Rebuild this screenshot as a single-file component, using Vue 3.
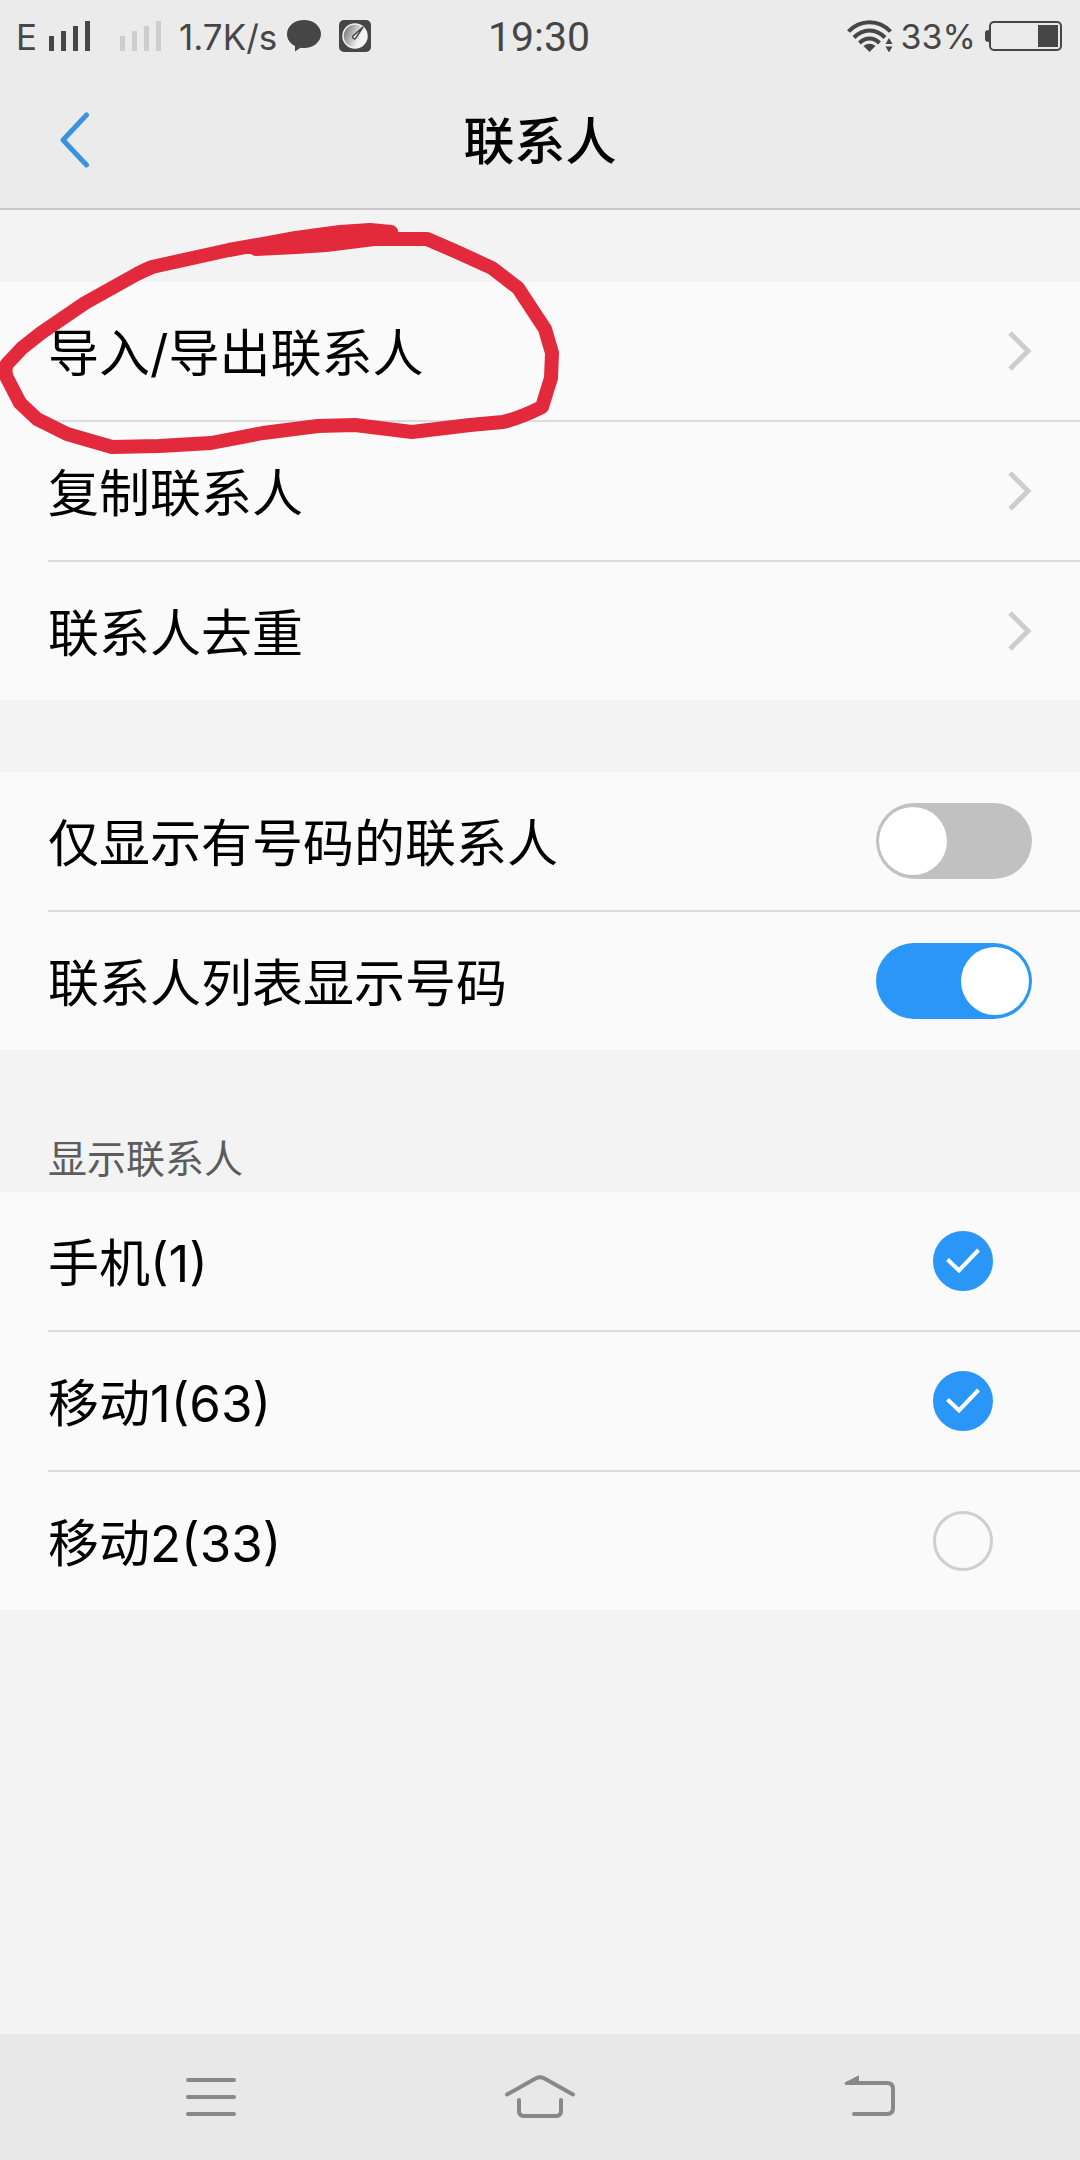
<script setup>
import { ref } from 'vue'

const links = ['导入/导出联系人', '复制联系人', '联系人去重']

const switches = ref([
  { id: 'only-numbers', label: '仅显示有号码的联系人', on: false },
  { id: 'show-numbers', label: '联系人列表显示号码', on: true },
])

const sources = ref([
  { id: 'phone', label: '手机(1)', on: true },
  { id: 'sim-1', label: '移动1(63)', on: true },
  { id: 'sim-2', label: '移动2(33)', on: false },
])
</script>

<template>
  <div class="screen">
    <header class="top">
      <div class="status">
        <div class="status-left">
          <span class="network">E</span>
          <svg class="signal" width="41" height="30" viewBox="0 0 41 30" aria-hidden="true">
            <path d="M0 15h5v15H0zM12 10h5v20h-5zM24 5h5v25h-5zM36 0h5v30h-5z" />
          </svg>
          <svg class="signal signal-off" width="41" height="30" viewBox="0 0 41 30" aria-hidden="true">
            <path d="M0 15h5v15H0zM12 10h5v20h-5zM24 5h5v25h-5zM36 0h5v30h-5z" />
          </svg>
          <span class="speed">1.7K/s</span>
          <svg class="bubble" width="34" height="32" viewBox="0 0 34 32" aria-hidden="true">
            <path d="M17 0C26.500 0 34 6.200 34 14s-7.500 14-17 14c-1.300 0-2.400-.1-3.500-.3L8 31.500V26C3 23.500 0 19.200 0 14 0 6.200 7.500 0 17 0z" />
          </svg>
          <svg class="gauge" width="32" height="32" viewBox="0 0 32 32" aria-hidden="true">
            <defs>
              <linearGradient id="dial" x1="0" y1="0.300" x2="0.700" y2="0.600">
                <stop offset="0" stop-color="#777" />
                <stop offset="1" stop-color="#f2f2f2" />
              </linearGradient>
            </defs>
            <rect width="32" height="32" rx="5" fill="#464646" />
            <circle cx="16" cy="16" r="12" fill="url(#dial)" stroke="#f2f2f2" stroke-width="1.500" />
            <path d="M24 7L14 16a1.800 1.800 0 0 0 2.500 2.500z" fill="#f2f2f2" stroke="#464646" stroke-width="1.500" />
          </svg>
        </div>
        <time class="clock">19:30</time>
        <div class="status-right">
          <svg width="46" height="32" viewBox="0 0 46 32" aria-hidden="true">
            <g fill="none" stroke="#464646" stroke-width="4">
              <path d="M1.500 11.500C13-1 32-1 43.500 11.500" />
              <path d="M7 17.500c9-9.500 22-9.500 31 0" />
              <path d="M12.500 23c6-6 14-6 20 0" />
            </g>
            <path d="M22.500 32l-6-6c4-3 8-3 12 0z" fill="#464646" />
            <path d="M38.500 24l3.500-6 3.500 6zM38.500 26.500h7L42 32.500z" fill="#464646" />
          </svg>
          <span class="percent">33%</span>
          <svg width="78" height="30" viewBox="0 0 78 30" aria-hidden="true">
            <path d="M5 9C2 9 1 10 1 12v6c0 2 1 3 4 3z" fill="#464646" />
            <rect x="6" y="1" width="71" height="28" rx="4" fill="none" stroke="#464646" stroke-width="2" />
            <path d="M54 4h20v22H54z" fill="#464646" />
          </svg>
        </div>
      </div>
      <div class="bar">
        <button class="back" type="button" aria-label="返回">
          <svg width="30" height="56" viewBox="0 0 30 56" aria-hidden="true">
            <path d="M26.500 3L3 28l23.500 25" />
          </svg>
        </button>
        <h1>联系人</h1>
      </div>
    </header>

    <main>
      <section class="group marked">
        <a v-for="item in links" :key="item" class="row" href="#">
          <span class="label">{{ item }}</span>
          <svg width="24" height="40" viewBox="0 0 24 40" aria-hidden="true">
            <path d="M2 2l18 18L2 38" />
          </svg>
        </a>
        <svg class="scribble" width="570" height="240" viewBox="0 220 570 240" aria-hidden="true">
          <path
            class="stroke"
            d="M256 249L296 247L326 245L374 239L427 239L457 252L492 268L518 288L545 329L552 353L551 378L542 407C528 414 516 419 503 422L470 425L412 432L355 425L318 426L263 433L211 443L159 446L112 447L67 434L37 419L20 403L7 378Q4 370 7 364L22 348L41 333L85 303L137 274Q145 270 152 267L229 250L296 238L340 232L370 230L391 232"
          />
          <path class="fill" d="M229 250L296 238L370 230L391 232L427 239L374 239L296 247z" />
        </svg>
      </section>

      <section class="group">
        <label v-for="item in switches" :key="item.id" class="row" :for="item.id">
          <span class="label">{{ item.label }}</span>
          <input :id="item.id" v-model="item.on" class="switch" type="checkbox" role="switch" />
        </label>
      </section>

      <h2>显示联系人</h2>
      <section class="group sources">
        <label v-for="item in sources" :key="item.id" class="row" :for="item.id">
          <span class="label">{{ item.label }}</span>
          <span class="tick">
            <input :id="item.id" v-model="item.on" type="checkbox" />
            <svg v-if="item.on" width="60" height="60" viewBox="0 0 60 60" aria-hidden="true">
              <path d="M14.500 28.500L26 39.500L45.500 19" />
            </svg>
          </span>
        </label>
      </section>
    </main>

    <nav class="keys">
      <button type="button" aria-label="菜单">
        <svg width="50" height="44" viewBox="0 0 50 44" aria-hidden="true">
          <path d="M2 5h46M2 22h46M2 39h46" />
        </svg>
      </button>
      <button type="button" aria-label="主页">
        <svg width="70" height="44" viewBox="0 0 70 44" aria-hidden="true">
          <path d="M2 19.500L31 3.300Q35 1 39 3.300L68 19.500M14 25v11q0 5 5 5h32q5 0 5-5V25" />
        </svg>
      </button>
      <button type="button" aria-label="后退">
        <svg width="52" height="44" viewBox="0 0 52 44" aria-hidden="true">
          <path d="M4 8h39q6 0 6 6v19q0 6-6 6H10" />
          <path class="head" d="M1 8L14.500 1v8.500H2z" />
        </svg>
      </button>
    </nav>
  </div>
</template>

<style>
body {
  margin: 0;
  background: #f3f3f3;
}
</style>

<style scoped>
.screen {
  display: flex;
  flex-direction: column;
  min-height: 100vh;
  background: #f3f3f3;
  color: #000;
  font-family: Inter, "Noto Sans CJK SC", sans-serif;
}

button {
  display: flex;
  padding: 0;
  border: 0;
  background: none;
}

svg {
  display: block;
  flex: none;
}

.top {
  border-bottom: 2px solid #c8c8c8;
  background: #ebebeb;
}

.status {
  display: grid;
  grid-template-columns: 1fr auto 1fr;
  align-items: center;
  height: 72px;
  padding: 0 18px 0 16px;
  color: #464646;
  font-size: 35px;
  line-height: 40px;
}

.status span,
.clock {
  padding-top: 2px;
}

.status-left,
.status-right {
  display: flex;
  align-items: center;
}

.status-right {
  justify-content: flex-end;
  gap: 8px;
}

.network {
  width: 33px;
}

.signal {
  fill: #464646;
}

.signal-off {
  margin: 0 18px 0 30px;
  fill: #cdcdcd;
}

.bubble {
  margin: 0 18px 0 10px;
  fill: #464646;
}

.percent {
  font-size: 34px;
}

.clock {
  font-family: Roboto, sans-serif;
  font-size: 41px;
}

.bar {
  display: grid;
  grid-template-columns: 1fr auto 1fr;
  align-items: center;
  height: 136px;
  padding: 0 60px;
}

.back path {
  fill: none;
  stroke: #3a93e0;
  stroke-width: 5;
  stroke-linecap: round;
  stroke-linejoin: round;
}

h1 {
  margin: 0;
  padding-top: 4px;
  font-size: 51px;
  font-weight: 500;
  line-height: 72px;
}

h2 {
  margin: 72px 0 0;
  padding: 10px 48px 6px;
  color: #5c5c5c;
  font-size: 39px;
  font-weight: 400;
  line-height: 54px;
}

.group {
  margin-top: 72px;
  padding-left: 48px;
  background: #fafafa;
}

.marked {
  position: relative;
}

.sources {
  margin-top: 0;
}

.row {
  display: flex;
  align-items: center;
  justify-content: space-between;
  height: 138px;
  padding-right: 48px;
  color: inherit;
  font-size: 51px;
  line-height: 72px;
  text-decoration: none;
}

.label {
  padding-top: 6px;
}

.row + .row {
  border-top: 2px solid #dcdcdc;
}

.row path {
  fill: none;
  stroke: #cdcdcd;
  stroke-width: 5;
}

.sources .row {
  padding-right: 87px;
}

.scribble {
  position: absolute;
  top: -62px;
  left: 0;
  pointer-events: none;
}

.row .tick path {
  stroke: #fff;
  stroke-width: 4;
}

.stroke {
  fill: none;
  stroke: #e22a3c;
  stroke-width: 14;
  stroke-linecap: round;
  stroke-linejoin: round;
}

.fill {
  fill: #e22a3c;
}

.switch {
  display: flex;
  align-items: center;
  appearance: none;
  width: 156px;
  height: 76px;
  margin: 0;
  padding: 0 3px;
  box-sizing: border-box;
  border-radius: 38px;
  background: #c1c1c1;
}

.switch::before {
  width: 68px;
  height: 68px;
  border-radius: 50%;
  background: #fff;
  content: "";
}

.switch:checked {
  justify-content: flex-end;
  background: #2a97f8;
}

.tick {
  display: grid;
}

.tick > * {
  grid-area: 1 / 1;
}

.tick input {
  appearance: none;
  width: 60px;
  height: 60px;
  margin: 0;
  box-sizing: border-box;
  border: 3px solid #cfcfcf;
  border-radius: 50%;
}

.tick input:checked {
  border-color: #2a97f8;
  background: #2a97f8;
}

.tick svg {
  pointer-events: none;
}

.keys {
  display: flex;
  align-items: center;
  justify-content: space-between;
  height: 126px;
  margin-top: auto;
  padding: 0 184px 0 186px;
  background: #e8e8e8;
}

.keys path {
  fill: none;
  stroke: #888;
  stroke-width: 4;
  stroke-linecap: round;
  stroke-linejoin: round;
}

.keys .head {
  fill: #888;
  stroke-width: 1;
}
</style>
